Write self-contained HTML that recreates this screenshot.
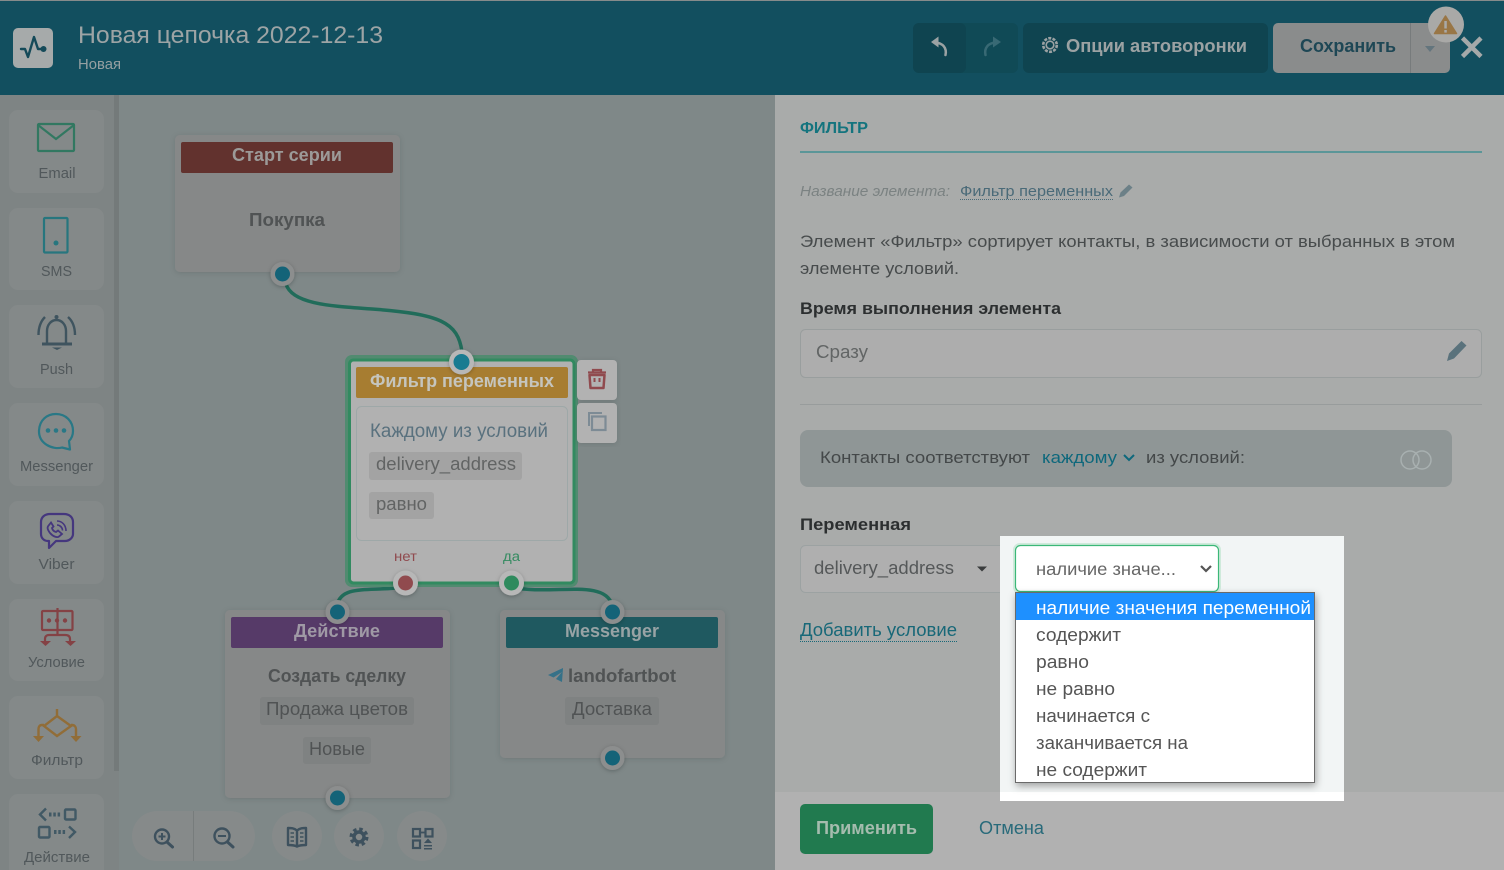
<!DOCTYPE html>
<html lang="ru"><head><meta charset="utf-8"><title>Новая цепочка</title>
<style>
html,body{margin:0;padding:0;width:1504px;height:870px;overflow:hidden;background:#7d8888}
svg{display:block}
text{font-family:"Liberation Sans","Noto Sans CJK SC",sans-serif;white-space:pre}
.b{font-weight:700}
</style></head><body>
<svg width="1504" height="870" viewBox="0 0 1504 870" xmlns="http://www.w3.org/2000/svg">
<defs>
<filter id="sh" x="-10%" y="-10%" width="120%" height="120%"><feDropShadow dx="0" dy="1" stdDeviation="3" flood-color="#000" flood-opacity=".12"/></filter>
<filter id="sh2" x="-10%" y="-10%" width="120%" height="120%"><feDropShadow dx="1" dy="3" stdDeviation="4" flood-color="#000" flood-opacity=".35"/></filter>
<filter id="sh3" x="-40%" y="-40%" width="180%" height="180%"><feDropShadow dx="0" dy="1" stdDeviation="2" flood-color="#000" flood-opacity=".25"/></filter>
<filter id="mute" filterUnits="userSpaceOnUse" x="0" y="0" width="1504" height="870" color-interpolation-filters="sRGB"><feColorMatrix type="saturate" values="0.82"/></filter>
</defs>

<g filter="url(#mute)">
<!-- canvas -->
<rect width="1504" height="870" fill="#7d8888"/>
<rect x="0" y="95" width="114" height="775" fill="#7d8484"/>
<rect x="114" y="95" width="5" height="676" fill="#737a7a"/>
<rect x="114" y="771" width="5" height="99" fill="#7d8484"/>

<!-- header -->
<rect width="1504" height="95" fill="#075265"/>
<rect width="1504" height="1" fill="#858b8b"/>
<rect x="13" y="28" width="40" height="40" rx="5" fill="#a5aaaa"/>
<path d="M21 49H25L28 57L34 37L38 49H42" fill="none" stroke="#0b4c5e" stroke-width="2.400" stroke-linejoin="round" stroke-linecap="round"/>
<circle cx="43.500" cy="49" r="3" fill="#0b4c5e"/>
<text x="78" y="43" font-size="24" fill="#9ca4a6" textLength="305" lengthAdjust="spacingAndGlyphs">Новая цепочка 2022-12-13</text>
<text x="78" y="69" font-size="14.500" fill="#94a0a3" textLength="43" lengthAdjust="spacingAndGlyphs">Новая</text>

<rect x="913" y="23" width="105" height="50" rx="6" fill="#064c5b"/>
<rect x="913" y="23" width="53" height="50" rx="6" fill="#064655"/>
<path d="M945.500 55C947 48 943 43 935 42.500" fill="none" stroke="#9aa2a4" stroke-width="2.500" stroke-linecap="round"/>
<path d="M931 42L938.500 36.500V47.500Z" fill="#9aa2a4"/>
<path d="M985.500 55C984 48 988 43 996 42.500" fill="none" stroke="#2f6b78" stroke-width="2.500" stroke-linecap="round"/>
<path d="M1001 42L993 36.500V47.500Z" fill="#2f6b78"/>
<rect x="1023" y="23" width="245" height="50" rx="6" fill="#064655"/>
<circle cx="1050" cy="45" r="3.800" fill="none" stroke="#9aa2a4" stroke-width="1.600"/>
<circle cx="1050" cy="45" r="6.800" fill="none" stroke="#9aa2a4" stroke-width="2.600" stroke-dasharray="3 1.300"/>
<text x="1066" y="52" font-size="18" class="b" fill="#9aa2a4" textLength="181" lengthAdjust="spacingAndGlyphs">Опции автоворонки</text>
<rect x="1273" y="23" width="177" height="50" rx="5" fill="#8a8c8c"/>
<rect x="1410" y="23" width="1" height="50" fill="#767b7c"/>
<text x="1300" y="52" font-size="18" class="b" fill="#17495a" textLength="96" lengthAdjust="spacingAndGlyphs">Сохранить</text>
<path d="M1425 46H1435L1430 52Z" fill="#607680"/>
<circle cx="1446" cy="24.500" r="18" fill="#a9a9a7"/>
<path d="M1445.500 16L1456.500 33.500H1434.500Z" fill="#a0753a" stroke="#a0753a" stroke-width="1.500" stroke-linejoin="round"/>
<rect x="1444.300" y="21" width="2.500" height="7.500" fill="#a9a9a7"/>
<rect x="1444.300" y="30" width="2.500" height="2.600" fill="#a9a9a7"/>
<path d="M1462.500 38L1481 56.500M1481 38L1462.500 56.500" stroke="#a4a9a9" stroke-width="4.500"/>

<!-- sidebar cards -->
<g fill="#838989">
<rect x="9" y="110" width="95" height="83" rx="9"/>
<rect x="9" y="208" width="95" height="82" rx="9"/>
<rect x="9" y="305" width="95" height="83" rx="9"/>
<rect x="9" y="403" width="95" height="83" rx="9"/>
<rect x="9" y="501" width="95" height="83" rx="9"/>
<rect x="9" y="599" width="95" height="82" rx="9"/>
<rect x="9" y="696" width="95" height="83" rx="9"/>
<rect x="9" y="794" width="95" height="90" rx="9"/>
</g>
<!-- email -->
<rect x="38" y="124" width="36" height="27" rx="1" fill="none" stroke="#267c60" stroke-width="2.200"/>
<path d="M38 125L56 139L74 125" fill="none" stroke="#267c60" stroke-width="2.200"/>
<!-- sms -->
<rect x="44" y="218" width="23.500" height="34.500" rx="1" fill="none" stroke="#197a83" stroke-width="2.200"/>
<circle cx="56" cy="243" r="2.500" fill="#197a83"/>
<!-- push -->
<g fill="none" stroke="#3b5562" stroke-width="2.400">
<path d="M47 343V331C47 325 51 320 56.500 320C62 320 66 325 66 331V343"/>
<path d="M42 344H72" stroke-width="3"/>
<path d="M38.500 335C38.500 327 41 321 45 317"/>
<path d="M75 335C75 327 72.500 321 68 317"/>
</g>
<path d="M52 347.500H62L57 350Z" fill="#3b5562"/>
<circle cx="56.500" cy="317" r="2" fill="#3b5562"/>
<!-- messenger -->
<path d="M62 447.500C53 450 38.500 444 39 430.500C39.500 420 47 414 56 414C66 414 73 421.500 73 431C73 436 71 439 69 441L70 449.500Z" fill="none" stroke="#1b7c8c" stroke-width="2.200" stroke-linejoin="round"/>
<circle cx="48" cy="430.500" r="2.300" fill="#1b7c8c"/><circle cx="56" cy="430.500" r="2.300" fill="#1b7c8c"/><circle cx="64" cy="430.500" r="2.300" fill="#1b7c8c"/>
<!-- viber -->
<path d="M49 541H48C44 541 41 538 41 534V522C41 517 45 514 50 514H64C69 514 73 517 73 522V534C73 538 69 541 65 541H56L49 548Z" fill="none" stroke="#46358c" stroke-width="2.200" stroke-linejoin="round"/>
<path d="M49 525C47 527 47 529 50 533C53 536.500 57 538 59 536.500L62 534L58 530.500L56 532C54 531.500 52.500 530 52 528L53.500 526.500L51 522.500Z" fill="none" stroke="#46358c" stroke-width="1.800"/>
<path d="M57 521C62 521 66 525 66 531M57 525C60 525 62.500 527.500 62.500 530.500" fill="none" stroke="#46358c" stroke-width="1.600"/>
<!-- condition -->
<g fill="none" stroke="#8f3f43" stroke-width="2.200">
<rect x="42" y="611" width="30.500" height="19" rx="1"/>
<path d="M57.500 608V634M45 642V639C45 636 47 635 49 635H65C68 635 70 636 70 639V642"/>
</g>
<g fill="#8f3f43">
<circle cx="49" cy="620.500" r="2.200"/><circle cx="57" cy="620.500" r="2.200"/><circle cx="65" cy="620.500" r="2.200"/>
<path d="M40 641H51L45.500 646Z"/><path d="M65 641H76L70.500 646Z"/>
</g>
<!-- filter -->
<g fill="none" stroke="#986c2b" stroke-width="2.400">
<path d="M57 709V716M57 716L71 726L57 736L44 726Z"/>
<path d="M44 725H42C39.500 725 38.500 727 38.500 729V737M71 725H72C74.500 725 76 727 76 729V737"/>
</g>
<path d="M33 736H44L38.500 742Z" fill="#986c2b"/><path d="M70.500 736H81.500L76 742Z" fill="#986c2b"/>
<!-- action -->
<g fill="none" stroke="#3d5a68" stroke-width="2.400">
<path d="M46 808.500L40 814.500L46 820.500"/>
<rect x="65" y="809.500" width="10.500" height="10" rx="1"/>
<rect x="39" y="827" width="10.500" height="10.500" rx="1"/>
<path d="M69 826.500L75 832L69 838"/>
<path d="M49 814.500H61M54 832H66" stroke-dasharray="2.500 1.800" stroke-width="4"/>
</g>

<g fill="#50585c" font-size="14.500" text-anchor="start">
<text x="38.500" y="178" textLength="37" lengthAdjust="spacingAndGlyphs">Email</text>
<text x="41" y="276" textLength="31" lengthAdjust="spacingAndGlyphs">SMS</text>
<text x="40" y="374" textLength="33" lengthAdjust="spacingAndGlyphs">Push</text>
<text x="20" y="471" textLength="73" lengthAdjust="spacingAndGlyphs">Messenger</text>
<text x="38.500" y="569" textLength="36" lengthAdjust="spacingAndGlyphs">Viber</text>
<text x="28" y="667" textLength="57" lengthAdjust="spacingAndGlyphs">Условие</text>
<text x="31" y="765" textLength="52" lengthAdjust="spacingAndGlyphs">Фильтр</text>
<text x="24" y="862" textLength="66" lengthAdjust="spacingAndGlyphs">Действие</text>
</g>

<!-- connectors -->
<g fill="none" stroke="#14705a" stroke-width="3.500">
<path d="M286 284C292 304 330 306 372 309C440 314 458 322 462 352"/>
<path d="M405 587C370 592 342 584 337 605"/>
<path d="M512 587C550 596 605 578 612 605"/>
</g>

<!-- start node -->
<rect x="175" y="135" width="225" height="137" rx="5" fill="#868888" filter="url(#sh)"/>
<rect x="181" y="142" width="212" height="31" rx="2" fill="#6a302b"/>
<text x="232" y="161" font-size="18" class="b" fill="#9c9a98" textLength="110" lengthAdjust="spacingAndGlyphs">Старт серии</text>
<text x="249" y="226" font-size="18" class="b" fill="#505354" textLength="76" lengthAdjust="spacingAndGlyphs">Покупка</text>
<circle cx="282.500" cy="274" r="12" fill="#8c8e8e" filter="url(#sh3)"/><circle cx="282.500" cy="274" r="7.500" fill="#066680"/>

<!-- action node -->
<rect x="225" y="610" width="225" height="188" rx="5" fill="#868888" filter="url(#sh)"/>
<rect x="231" y="617" width="212" height="31" rx="2" fill="#5a3870"/>
<text x="294" y="637" font-size="18" class="b" fill="#a098a7" textLength="86" lengthAdjust="spacingAndGlyphs">Действие</text>
<text x="268" y="682" font-size="18" class="b" fill="#505354" textLength="138" lengthAdjust="spacingAndGlyphs">Создать сделку</text>
<rect x="260" y="697" width="154" height="28" rx="3" fill="#7e8282"/>
<text x="266" y="715" font-size="18" fill="#505354" textLength="142" lengthAdjust="spacingAndGlyphs">Продажа цветов</text>
<rect x="303" y="737" width="68" height="27" rx="3" fill="#7e8282"/>
<text x="309" y="755" font-size="18" fill="#505354" textLength="56" lengthAdjust="spacingAndGlyphs">Новые</text>
<circle cx="337.500" cy="612" r="12" fill="#8c8e8e" filter="url(#sh3)"/><circle cx="337.500" cy="612" r="7.500" fill="#066680"/>
<circle cx="337.500" cy="798" r="12" fill="#8c8e8e" filter="url(#sh3)"/><circle cx="337.500" cy="798" r="7.500" fill="#066680"/>

<!-- messenger node -->
<rect x="500" y="610" width="225" height="148" rx="5" fill="#868888" filter="url(#sh)"/>
<rect x="506" y="617" width="212" height="31" rx="2" fill="#155c64"/>
<text x="565" y="637" font-size="18" class="b" fill="#96a4a6" textLength="94" lengthAdjust="spacingAndGlyphs">Messenger</text>
<path d="M563 668L548 675L553.500 677.500L562 672L556 679L562 682Z" fill="#2a7390"/>
<text x="568" y="682" font-size="18" class="b" fill="#505354" textLength="108" lengthAdjust="spacingAndGlyphs">landofartbot</text>
<rect x="565" y="697" width="94" height="28" rx="3" fill="#7e8282"/>
<text x="572" y="715" font-size="18" fill="#505354" textLength="80" lengthAdjust="spacingAndGlyphs">Доставка</text>
<circle cx="612.500" cy="612" r="12" fill="#8c8e8e" filter="url(#sh3)"/><circle cx="612.500" cy="612" r="7.500" fill="#066680"/>
<circle cx="612.500" cy="758" r="12" fill="#8c8e8e" filter="url(#sh3)"/><circle cx="612.500" cy="758" r="7.500" fill="#066680"/>

<!-- filter node -->
<rect x="345" y="355" width="233" height="232" rx="7" fill="#478e6d"/>
<rect x="349.500" y="360" width="224.500" height="223" rx="4" fill="#b1b1b1" stroke="#238f5c" stroke-width="3"/>
<rect x="356" y="367" width="212" height="31" rx="2" fill="#b07c20"/>
<text x="370" y="387" font-size="18" class="b" fill="#c5c5bc" textLength="184" lengthAdjust="spacingAndGlyphs">Фильтр переменных</text>
<rect x="356.500" y="406.500" width="211" height="134" rx="5" fill="none" stroke="#9ca9a8"/>
<text x="370" y="437" font-size="19" fill="#557282" textLength="178" lengthAdjust="spacingAndGlyphs">Каждому из условий</text>
<rect x="369" y="452" width="153" height="28" rx="3" fill="#a3a3a3"/>
<text x="376" y="470" font-size="18" fill="#626464" textLength="140" lengthAdjust="spacingAndGlyphs">delivery_address</text>
<rect x="369" y="492" width="65" height="27" rx="3" fill="#a3a3a3"/>
<text x="376" y="510" font-size="18" fill="#626464" textLength="51" lengthAdjust="spacingAndGlyphs">равно</text>
<text x="394" y="561" font-size="13.500" fill="#9c474c" textLength="23" lengthAdjust="spacingAndGlyphs">нет</text>
<text x="503" y="561" font-size="13.500" fill="#27905d" textLength="17" lengthAdjust="spacingAndGlyphs">да</text>
<circle cx="461.500" cy="362" r="12.500" fill="#b7b7b7" filter="url(#sh3)"/><circle cx="461.500" cy="362" r="8" fill="#077f9a"/>
<circle cx="405.500" cy="583" r="12.500" fill="#b7b7b7" filter="url(#sh3)"/><circle cx="405.500" cy="583" r="7.500" fill="#9c474c"/>
<circle cx="511.500" cy="583" r="12.500" fill="#b7b7b7" filter="url(#sh3)"/><circle cx="511.500" cy="583" r="7.500" fill="#1f8f58"/>

<rect x="577" y="360" width="40" height="40" rx="4" fill="#b2b2b2" filter="url(#sh)"/>
<rect x="577" y="403" width="40" height="40" rx="4" fill="#b2b2b2" filter="url(#sh)"/>
<path d="M589.500 375H604.500L603.500 388H590.500Z" fill="none" stroke="#9c474c" stroke-width="2.500" stroke-linejoin="round"/>
<path d="M588 372.500H606M593 372V370H601V372" fill="none" stroke="#9c474c" stroke-width="2.200"/>
<path d="M594.500 378V382M599.500 378V382" stroke="#9c474c" stroke-width="2"/>
<path d="M589 426V413H602" fill="none" stroke="#7a8c98" stroke-width="2"/>
<rect x="592" y="416.500" width="13.500" height="13.500" fill="none" stroke="#7a8c98" stroke-width="2.200"/>

<!-- bottom tools -->
<rect x="132" y="811" width="123" height="50" rx="25" fill="#858a8a"/>
<rect x="193" y="811" width="1" height="50" fill="#767c7c"/>
<circle cx="297" cy="836" r="25" fill="#858a8a"/><circle cx="359" cy="836" r="25" fill="#858a8a"/><circle cx="422" cy="836" r="25" fill="#858a8a"/>
<g fill="none" stroke="#3b5261" stroke-width="2.400">
<circle cx="162" cy="836.500" r="7"/><path d="M167 842L172.500 847" stroke-width="3" stroke-linecap="round"/><path d="M158.500 836.500H165.500M162 833V840" stroke-width="2"/>
<circle cx="222" cy="836" r="7.500"/><path d="M227.500 842L233 847" stroke-width="3" stroke-linecap="round"/><path d="M218 836H226" stroke-width="2"/>
<path d="M297 830.500C294 828 291 828 288 828V845C291 845 294 845 297 846.500C300 845 303 845 306 845V828C303 828 300 828 297 830.500ZM297 830.500V846" stroke-linejoin="round"/>
<path d="M290.500 833H294M290.500 837H294M290.500 841H294M300 833H303.500M300 837H303.500M300 841H303.500" stroke-width="1.500"/>
<circle cx="359" cy="837" r="5" stroke-width="3.500"/>
<circle cx="359" cy="837" r="8" stroke-width="3" stroke-dasharray="3.500 2.780"/>
<rect x="413" y="829" width="7" height="7.500" stroke-width="2.200"/><rect x="425.500" y="829" width="7" height="7.500" stroke-width="2.200"/><rect x="413" y="840.500" width="7" height="7.500" stroke-width="2.200"/>
<path d="M420 832.500H425.500" stroke-width="1.800"/>
</g>
<path d="M424 843L428 838.500L432 843ZM424 845H432V846.500H424ZM424 848H432V849.500H424Z" fill="#3b5261"/>
</g>

<!-- right panel -->
<rect x="775" y="95" width="729" height="697" fill="#a9abaa"/>
<rect x="775" y="792" width="729" height="78" fill="#b1b1b1"/>
<text x="800" y="133" font-size="15.500" class="b" fill="#14747e" textLength="68" lengthAdjust="spacingAndGlyphs">ФИЛЬТР</text>
<rect x="800" y="151" width="682" height="2" fill="#5b9698"/>
<text x="800" y="196" font-size="15" font-style="italic" fill="#7b8282" textLength="150" lengthAdjust="spacingAndGlyphs">Название элемента:</text>
<text x="960" y="196" font-size="15" fill="#4a6a78" textLength="153" lengthAdjust="spacingAndGlyphs">Фильтр переменных</text>
<path d="M960 199.500H1113" stroke="#4a6a78" stroke-dasharray="1 1"/>
<path d="M1119 197.500L1120.500 192.500L1129 184.500L1132.500 187.500L1124 196Z" fill="#6c8087"/>
<text x="800" y="247" font-size="17" fill="#474b4c" textLength="655" lengthAdjust="spacingAndGlyphs">Элемент «Фильтр» сортирует контакты, в зависимости от выбранных в этом</text>
<text x="800" y="274" font-size="17" fill="#474b4c" textLength="159" lengthAdjust="spacingAndGlyphs">элементе условий.</text>
<text x="800" y="314" font-size="17" class="b" fill="#2c2f30" textLength="261" lengthAdjust="spacingAndGlyphs">Время выполнения элемента</text>
<rect x="800.500" y="329.500" width="681" height="48" rx="5" fill="#adadad" stroke="#999e9e"/>
<text x="816" y="358" font-size="18" fill="#626565" textLength="52" lengthAdjust="spacingAndGlyphs">Сразу</text>
<path d="M1447 361L1449 353.500L1461.500 341L1466.500 345.500L1454 358.500Z" fill="#5a727c"/>
<rect x="800" y="404" width="682" height="1" fill="#989c9c"/>
<rect x="800" y="430" width="652" height="57" rx="8" fill="#8f9696"/>
<text x="820" y="463" font-size="17" fill="#444849" textLength="210" lengthAdjust="spacingAndGlyphs">Контакты соответствуют</text>
<text x="1042" y="463" font-size="17" fill="#0e687c" textLength="75" lengthAdjust="spacingAndGlyphs">каждому</text>
<path d="M1124 455L1129 460L1134 455" fill="none" stroke="#0e687c" stroke-width="2"/>
<text x="1146" y="463" font-size="17" fill="#444849" textLength="99" lengthAdjust="spacingAndGlyphs">из условий:</text>
<circle cx="1410" cy="460" r="9" fill="none" stroke="#a8b0b0" stroke-width="1.500"/><circle cx="1422" cy="460" r="9" fill="none" stroke="#a8b0b0" stroke-width="1.500"/>
<text x="800" y="530" font-size="17" class="b" fill="#2c2f30" textLength="111" lengthAdjust="spacingAndGlyphs">Переменная</text>
<rect x="800.500" y="545.500" width="210" height="47" rx="5" fill="#afafaf" stroke="#9ca2a2"/>
<text x="814" y="574" font-size="18" fill="#555859" textLength="140" lengthAdjust="spacingAndGlyphs">delivery_address</text>
<path d="M977 566.500H987L982 571.500Z" fill="#3a3c3d"/>
<text x="800" y="636" font-size="18" fill="#186878" textLength="157" lengthAdjust="spacingAndGlyphs">Добавить условие</text>
<path d="M800 641.500H957" stroke="#186878" stroke-dasharray="1 1"/>

<rect x="800" y="804" width="133" height="50" rx="5" fill="#217a4f"/>
<text x="816" y="834" font-size="18" class="b" fill="#a5bcae" textLength="101" lengthAdjust="spacingAndGlyphs">Применить</text>
<text x="979" y="834" font-size="18" fill="#286a7a" textLength="65" lengthAdjust="spacingAndGlyphs">Отмена</text>

<!-- highlight -->
<rect x="1000" y="536" width="344" height="256" fill="#f2f5f5"/>
<rect x="1000" y="792" width="344" height="9" fill="#ffffff"/>
<rect x="1014" y="544" width="206" height="49" rx="6" fill="none" stroke="#cfeadb" stroke-width="2"/>
<rect x="1015.500" y="545.500" width="203" height="46" rx="5" fill="#fff" stroke="#3cb878" stroke-width="1.200"/>
<text x="1036" y="575" font-size="17.500" fill="#666" textLength="140" lengthAdjust="spacingAndGlyphs">наличие значе...</text>
<path d="M1201 566L1206 571L1211 566" fill="none" stroke="#555" stroke-width="2.200"/>
<rect x="1015.500" y="592.500" width="299" height="190" fill="#fff" stroke="#6a6a6a" filter="url(#sh2)"/>
<rect x="1016" y="593" width="298" height="27" fill="#1e90ff"/>
<g font-size="18" fill="#555">
<text x="1036" y="614" fill="#fff" textLength="275" lengthAdjust="spacingAndGlyphs">наличие значения переменной</text>
<text x="1036" y="641" textLength="85" lengthAdjust="spacingAndGlyphs">содержит</text>
<text x="1036" y="668" textLength="53" lengthAdjust="spacingAndGlyphs">равно</text>
<text x="1036" y="695" textLength="79" lengthAdjust="spacingAndGlyphs">не равно</text>
<text x="1036" y="722" textLength="114" lengthAdjust="spacingAndGlyphs">начинается с</text>
<text x="1036" y="749" textLength="152" lengthAdjust="spacingAndGlyphs">заканчивается на</text>
<text x="1036" y="776" textLength="111" lengthAdjust="spacingAndGlyphs">не содержит</text>
</g>
</svg>
</body></html>
